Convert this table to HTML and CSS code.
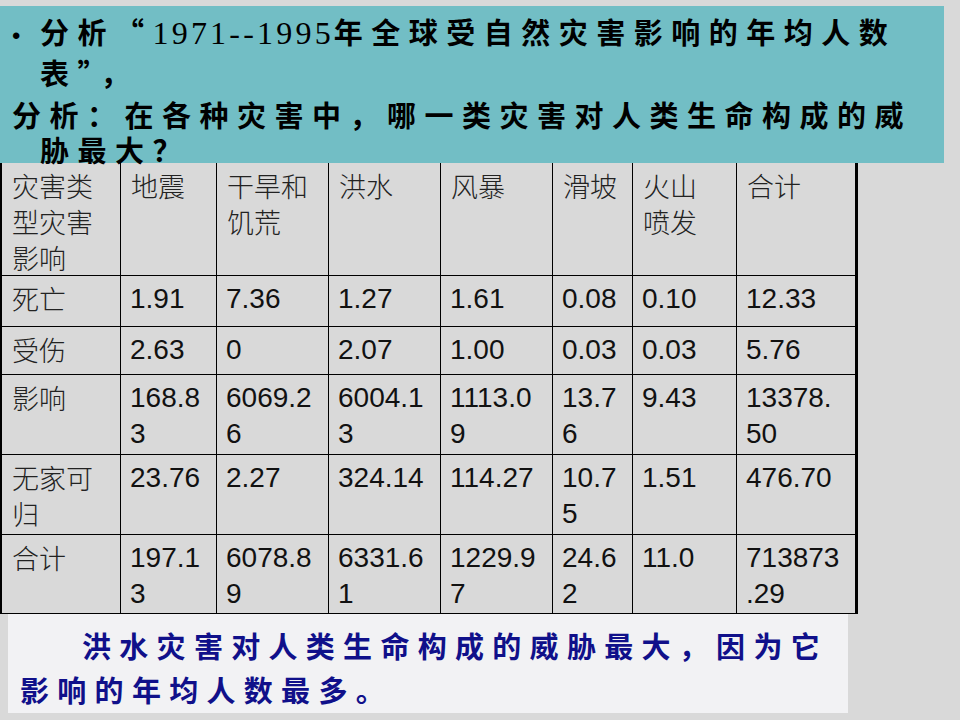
FILE: index.html
```html
<!DOCTYPE html>
<html lang="zh-CN">
<head>
<meta charset="utf-8">
<title>1971--1995年全球受自然灾害影响的年均人数表</title>
<link rel="stylesheet" href="styles.css">
</head>
<body>
<div class="slide">
  <div class="prompt">
    <p class="q1">分析“<span class="num">1971--1995</span>年全球受自然灾害影响的年均人数表”，</p>
    <p class="q2">分析：在各种灾害中，哪一类灾害对人类生命构成的威胁最大？</p>
  </div>
  <div class="table">
    <div class="cell zh">灾害类型灾害影响</div>
    <div class="cell zh">地震</div>
    <div class="cell zh">干旱和饥荒</div>
    <div class="cell zh">洪水</div>
    <div class="cell zh">风暴</div>
    <div class="cell zh">滑坡</div>
    <div class="cell zh">火山<br>喷发</div>
    <div class="cell zh">合计</div>

    <div class="cell zh">死亡</div>
    <div class="cell">1.91</div>
    <div class="cell">7.36</div>
    <div class="cell">1.27</div>
    <div class="cell">1.61</div>
    <div class="cell">0.08</div>
    <div class="cell">0.10</div>
    <div class="cell">12.33</div>

    <div class="cell zh">受伤</div>
    <div class="cell">2.63</div>
    <div class="cell">0</div>
    <div class="cell">2.07</div>
    <div class="cell">1.00</div>
    <div class="cell">0.03</div>
    <div class="cell">0.03</div>
    <div class="cell">5.76</div>

    <div class="cell zh">影响</div>
    <div class="cell">168.83</div>
    <div class="cell">6069.26</div>
    <div class="cell">6004.13</div>
    <div class="cell">1113.09</div>
    <div class="cell">13.76</div>
    <div class="cell">9.43</div>
    <div class="cell">13378.50</div>

    <div class="cell zh">无家可归</div>
    <div class="cell">23.76</div>
    <div class="cell">2.27</div>
    <div class="cell">324.14</div>
    <div class="cell">114.27</div>
    <div class="cell">10.75</div>
    <div class="cell">1.51</div>
    <div class="cell">476.70</div>

    <div class="cell zh">合计</div>
    <div class="cell">197.13</div>
    <div class="cell">6078.89</div>
    <div class="cell">6331.61</div>
    <div class="cell">1229.97</div>
    <div class="cell">24.62</div>
    <div class="cell">11.0</div>
    <div class="cell">713873.29</div>
  </div>
  <div class="answer">洪水灾害对人类生命构成的威胁最大，因为它影响的年均人数最多。</div>
</div>
</body>
</html>
```
FILE: styles.css
```css
html, body {
  margin: 0;
  padding: 0;
  background: #d9d9d9;
}

.slide {
  width: 960px;
  height: 720px;
  padding-top: 6px;
  box-sizing: border-box;
  overflow: hidden;
}

.prompt {
  width: 944px;
  height: 157px;
  box-sizing: border-box;
  padding: 7px 24px 0 0;
  background: #72bec5;
  color: #000;
  font-family: "Noto Sans CJK SC", sans-serif;
  font-weight: 700;
  font-size: 29px;
  line-height: 36px;
  letter-spacing: 8.5px;
}

.prompt p {
  margin: 0;
  padding-left: 40px;
  text-indent: -28px;
}

.prompt .q1::before {
  content: "•";
  display: inline-block;
  width: 28px;
  text-indent: 0;
  letter-spacing: 0;
  font-family: "Liberation Sans", sans-serif;
  font-weight: 400;
  font-size: 24px;
}

.prompt .q2 {
  margin-top: 7px;
  line-height: 35px;
}

.num {
  font-family: "Liberation Serif", serif;
  font-weight: 400;
  font-size: 32px;
  line-height: 1;
  letter-spacing: 3.2px;
}

.table {
  display: grid;
  grid-template-columns: 119px 96px 112px 112px 112px 80px 104px 118px;
  grid-template-rows: 113px 51px 48px 80px 80px 79px;
  width: max-content;
  border-left: 2px solid #000;
  border-right: 3px solid #000;
  background: #d9d9d9;
  color: #111;
  font-family: "Liberation Sans", "Noto Sans CJK SC", sans-serif;
  font-size: 28px;
  line-height: 36px;
}

.cell {
  box-sizing: border-box;
  border-right: 1px solid #000;
  border-bottom: 1px solid #000;
  padding: 5px 11px 0 9px;
  line-break: anywhere;
  overflow-wrap: anywhere;
}

.cell:nth-child(8n) {
  border-right: 0;
}

.cell.zh {
  font-family: "Noto Sans CJK SC", sans-serif;
  font-weight: 300;
  font-size: 27px;
  color: #222;
  padding-left: 10px;
}

.answer {
  margin-left: 8px;
  width: 840px;
  height: 99px;
  box-sizing: border-box;
  padding: 9px 10px 0 12px;
  background: #f2f2f4;
  color: #10108a;
  font-family: "Noto Sans CJK SC", sans-serif;
  font-weight: 700;
  font-size: 29px;
  line-height: 44px;
  letter-spacing: 8.3px;
  text-indent: 62px;
}
```
